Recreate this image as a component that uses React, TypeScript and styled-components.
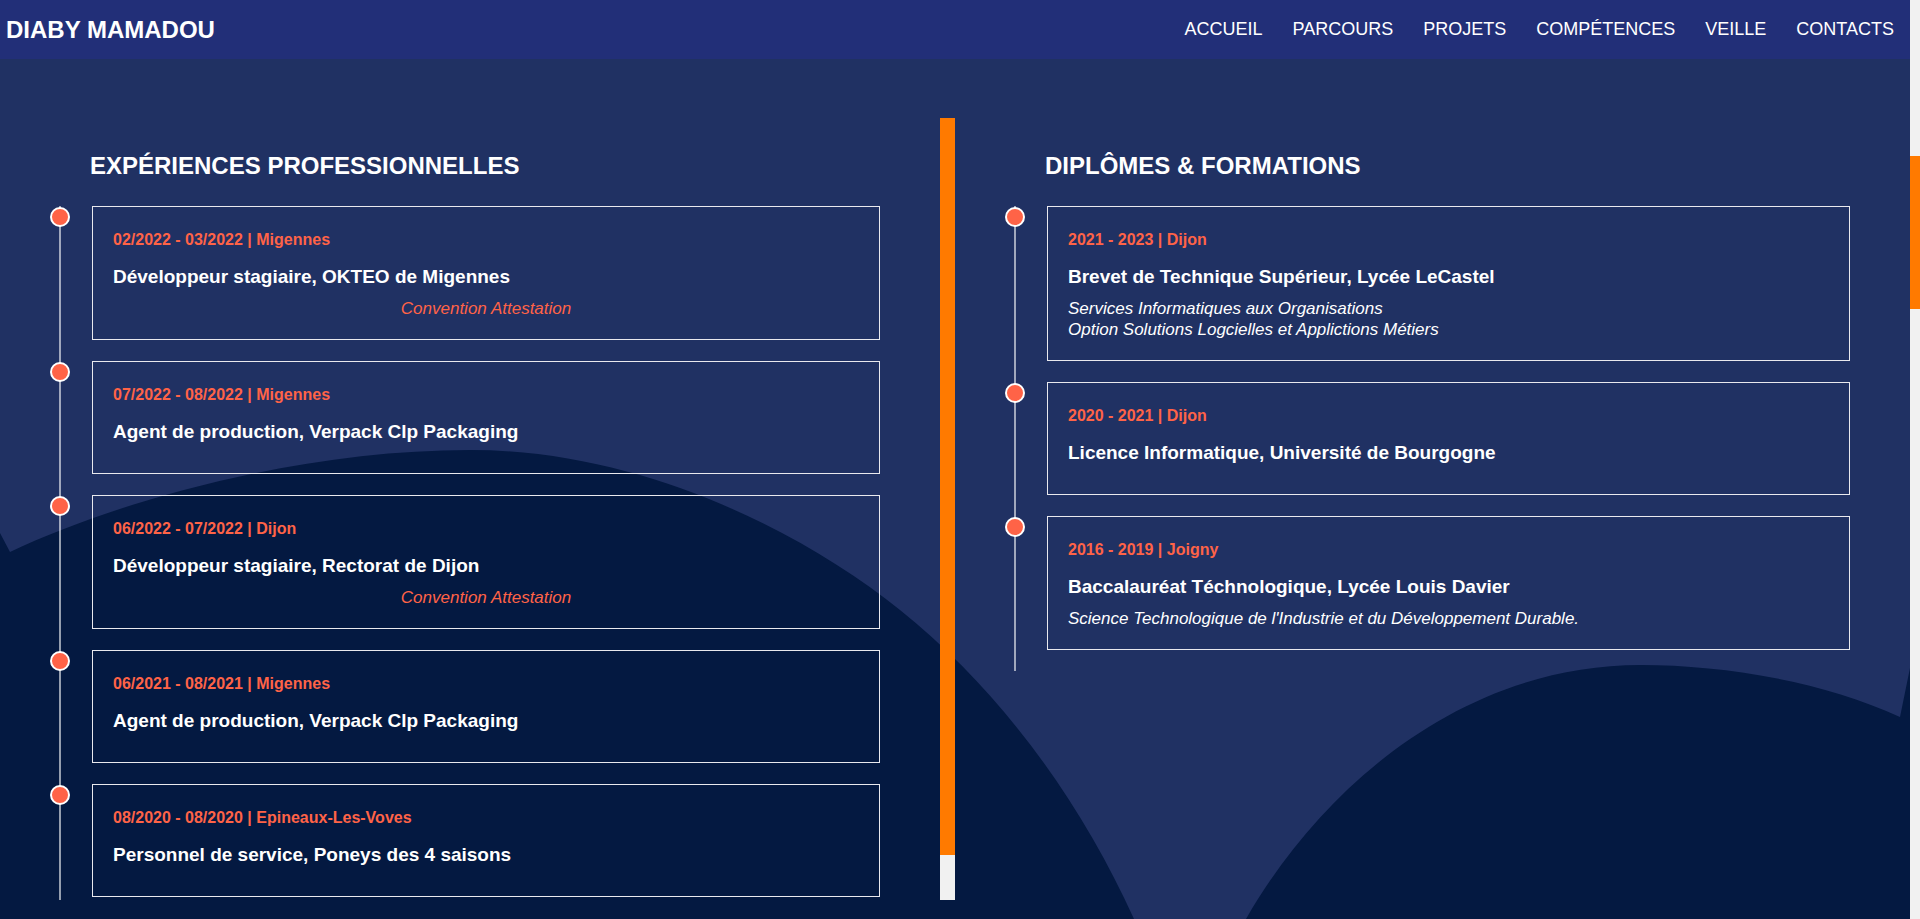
import React from "react";
import styled, { createGlobalStyle } from "styled-components";

const GlobalStyle = createGlobalStyle`
  html, body {
    margin: 0;
    padding: 0;
    height: 100%;
    overflow: hidden;
  }
  body {
    font-family: "Liberation Sans", Arial, sans-serif;
    background: #203163;
    color: #ffffff;
  }
  * { box-sizing: border-box; }
`;

const Screen = styled.div`
  display: flex;
  width: 100%;
  height: 100vh;
`;

const Page = styled.div`
  flex: 1;
  min-width: 0;
  display: flex;
  flex-direction: column;
`;

const NavBar = styled.header`
  height: 59px;
  flex-shrink: 0;
  display: flex;
  align-items: center;
  justify-content: space-between;
  padding: 0 16px 0 6px;
  background: #222f78;
`;

const Brand = styled.div`
  font-size: 24px;
  font-weight: 700;
  color: #ffffff;
`;

const NavList = styled.nav`
  display: flex;
  gap: 30px;
`;

const NavLink = styled.a`
  font-size: 18px;
  color: #ffffff;
  text-decoration: none;
`;

const Body = styled.main`
  flex: 1;
  position: relative;
  display: grid;
  grid-template-columns: 1fr 1fr;
  align-items: start;
  padding: 59px 0 19px;
  background: #203163;
  overflow: hidden;
`;

const Waves = styled.svg`
  position: absolute;
  inset: 0;
  width: 100%;
  height: 100%;
  z-index: 0;
`;

const ScrollPane = styled.div`
  position: relative;
  z-index: 1;
  display: flex;
  height: 782px;
  overflow: hidden;
`;

const Column = styled.section`
  position: relative;
  z-index: 1;
  flex: 1;
  min-width: 0;
  padding: 34px 60px 30px 92px;
`;

const Rail = styled.div`
  width: 15px;
  flex-shrink: 0;
  background: #f1f1f1;
  display: flex;
  flex-direction: column;
`;

const RailThumb = styled.div<{ $size: number; $offset?: number }>`
  height: ${(p) => p.$size}px;
  margin-top: ${(p) => p.$offset ?? 0}px;
  background: #ff7a00;
  flex-shrink: 0;
`;

const PageRail = styled.div`
  width: 10px;
  flex-shrink: 0;
  height: 100vh;
  background: #f1f1f1;
  display: flex;
  flex-direction: column;
`;

const Heading = styled.h2`
  margin: 0 0 26px -2px;
  font-size: 24px;
  font-weight: 700;
  line-height: normal;
  color: #ffffff;
`;

const Timeline = styled.div`
  position: relative;
  display: flow-root;

  &::before {
    content: "";
    position: absolute;
    left: -33px;
    top: 0;
    bottom: 0;
    width: 2px;
    background: rgba(255, 255, 255, 0.58);
  }
`;

const Card = styled.article`
  position: relative;
  margin-bottom: 21px;
  border: 1px solid #e9e9ee;
  padding: 24px 20px 20px;
`;

const Dot = styled.span`
  position: absolute;
  left: -43px;
  top: 0;
  width: 20px;
  height: 20px;
  border-radius: 50%;
  border: 2px solid #ffffff;
  background: #ff6347;
`;

const DateLine = styled.div`
  margin: 0 0 17px;
  font-size: 16px;
  font-weight: 700;
  color: #ff6347;
  line-height: normal;
`;

const Title = styled.h3`
  margin: 0 0 10px;
  font-size: 19px;
  font-weight: 700;
  line-height: normal;
  color: #ffffff;
`;

const Detail = styled.p<{ $centered?: boolean }>`
  margin: 0;
  font-size: 17px;
  font-style: italic;
  line-height: 21px;
  color: #ffffff;
  text-align: ${(p) => (p.$centered ? "center" : "left")};
`;

const DocLink = styled.a`
  color: #ff6347;
  text-decoration: none;
  font-style: italic;
`;

type Entry = {
  date: string;
  title: string;
  links?: string[];
  lines?: string[];
};

const experiences: Entry[] = [
  {
    date: "02/2022 - 03/2022 | Migennes",
    title: "Développeur stagiaire, OKTEO de Migennes",
    links: ["Convention", "Attestation"],
  },
  {
    date: "07/2022 - 08/2022 | Migennes",
    title: "Agent de production, Verpack Clp Packaging",
  },
  {
    date: "06/2022 - 07/2022 | Dijon",
    title: "Développeur stagiaire, Rectorat de Dijon",
    links: ["Convention", "Attestation"],
  },
  {
    date: "06/2021 - 08/2021 | Migennes",
    title: "Agent de production, Verpack Clp Packaging",
  },
  {
    date: "08/2020 - 08/2020 | Epineaux-Les-Voves",
    title: "Personnel de service, Poneys des 4 saisons",
  },
];

const diplomas: Entry[] = [
  {
    date: "2021 - 2023 | Dijon",
    title: "Brevet de Technique Supérieur, Lycée LeCastel",
    lines: [
      "Services Informatiques aux Organisations",
      "Option Solutions Logcielles et Applictions Métiers",
    ],
  },
  {
    date: "2020 - 2021 | Dijon",
    title: "Licence Informatique, Université de Bourgogne",
  },
  {
    date: "2016 - 2019 | Joigny",
    title: "Baccalauréat Téchnologique, Lycée Louis Davier",
    lines: ["Science Technologique de l'Industrie et du Développement Durable."],
  },
];

const TimelineCard: React.FC<{ entry: Entry }> = ({ entry }) => (
  <Card>
    <Dot />
    <DateLine>{entry.date}</DateLine>
    <Title>{entry.title}</Title>
    {entry.links && (
      <Detail $centered>
        {entry.links.map((l, i) => (
          <React.Fragment key={l}>
            {i > 0 && " "}
            <DocLink href="#">{l}</DocLink>
          </React.Fragment>
        ))}
      </Detail>
    )}
    {entry.lines &&
      entry.lines.map((line) => <Detail key={line}>{line}</Detail>)}
  </Card>
);

const navItems = ["ACCUEIL", "PARCOURS", "PROJETS", "COMPÉTENCES", "VEILLE", "CONTACTS"];

export default function App() {
  return (
    <>
      <GlobalStyle />
      <Screen>
        <Page>
          <NavBar>
            <Brand>DIABY MAMADOU</Brand>
            <NavList>
              {navItems.map((n) => (
                <NavLink key={n} href="#">
                  {n}
                </NavLink>
              ))}
            </NavList>
          </NavBar>
          <Body>
            <Waves viewBox="0 59 1910 860" preserveAspectRatio="none" aria-hidden="true">
              <path
                fill="#041941"
                d="M0 533 L10 552 C120 500 300 450 470 450 C640 450 800 530 900 610 C1000 690 1080 800 1134 919 L0 919 Z"
              />
              <path
                fill="#041941"
                d="M1246 919 C1320 790 1460 665 1641 665 C1720 665 1820 680 1900 717 L1910 668 L1910 919 Z"
              />
            </Waves>
            <ScrollPane>
              <Column>
                <Heading>EXPÉRIENCES PROFESSIONNELLES</Heading>
                <Timeline>
                  {experiences.map((e, i) => (
                    <TimelineCard key={i} entry={e} />
                  ))}
                </Timeline>
              </Column>
              <Rail>
                <RailThumb $size={737} />
              </Rail>
            </ScrollPane>
            <Column>
              <Heading>DIPLÔMES &amp; FORMATIONS</Heading>
              <Timeline>
                {diplomas.map((e, i) => (
                  <TimelineCard key={i} entry={e} />
                ))}
              </Timeline>
            </Column>
          </Body>
        </Page>
        <PageRail>
          <RailThumb $size={153} $offset={156} />
        </PageRail>
      </Screen>
    </>
  );
}
